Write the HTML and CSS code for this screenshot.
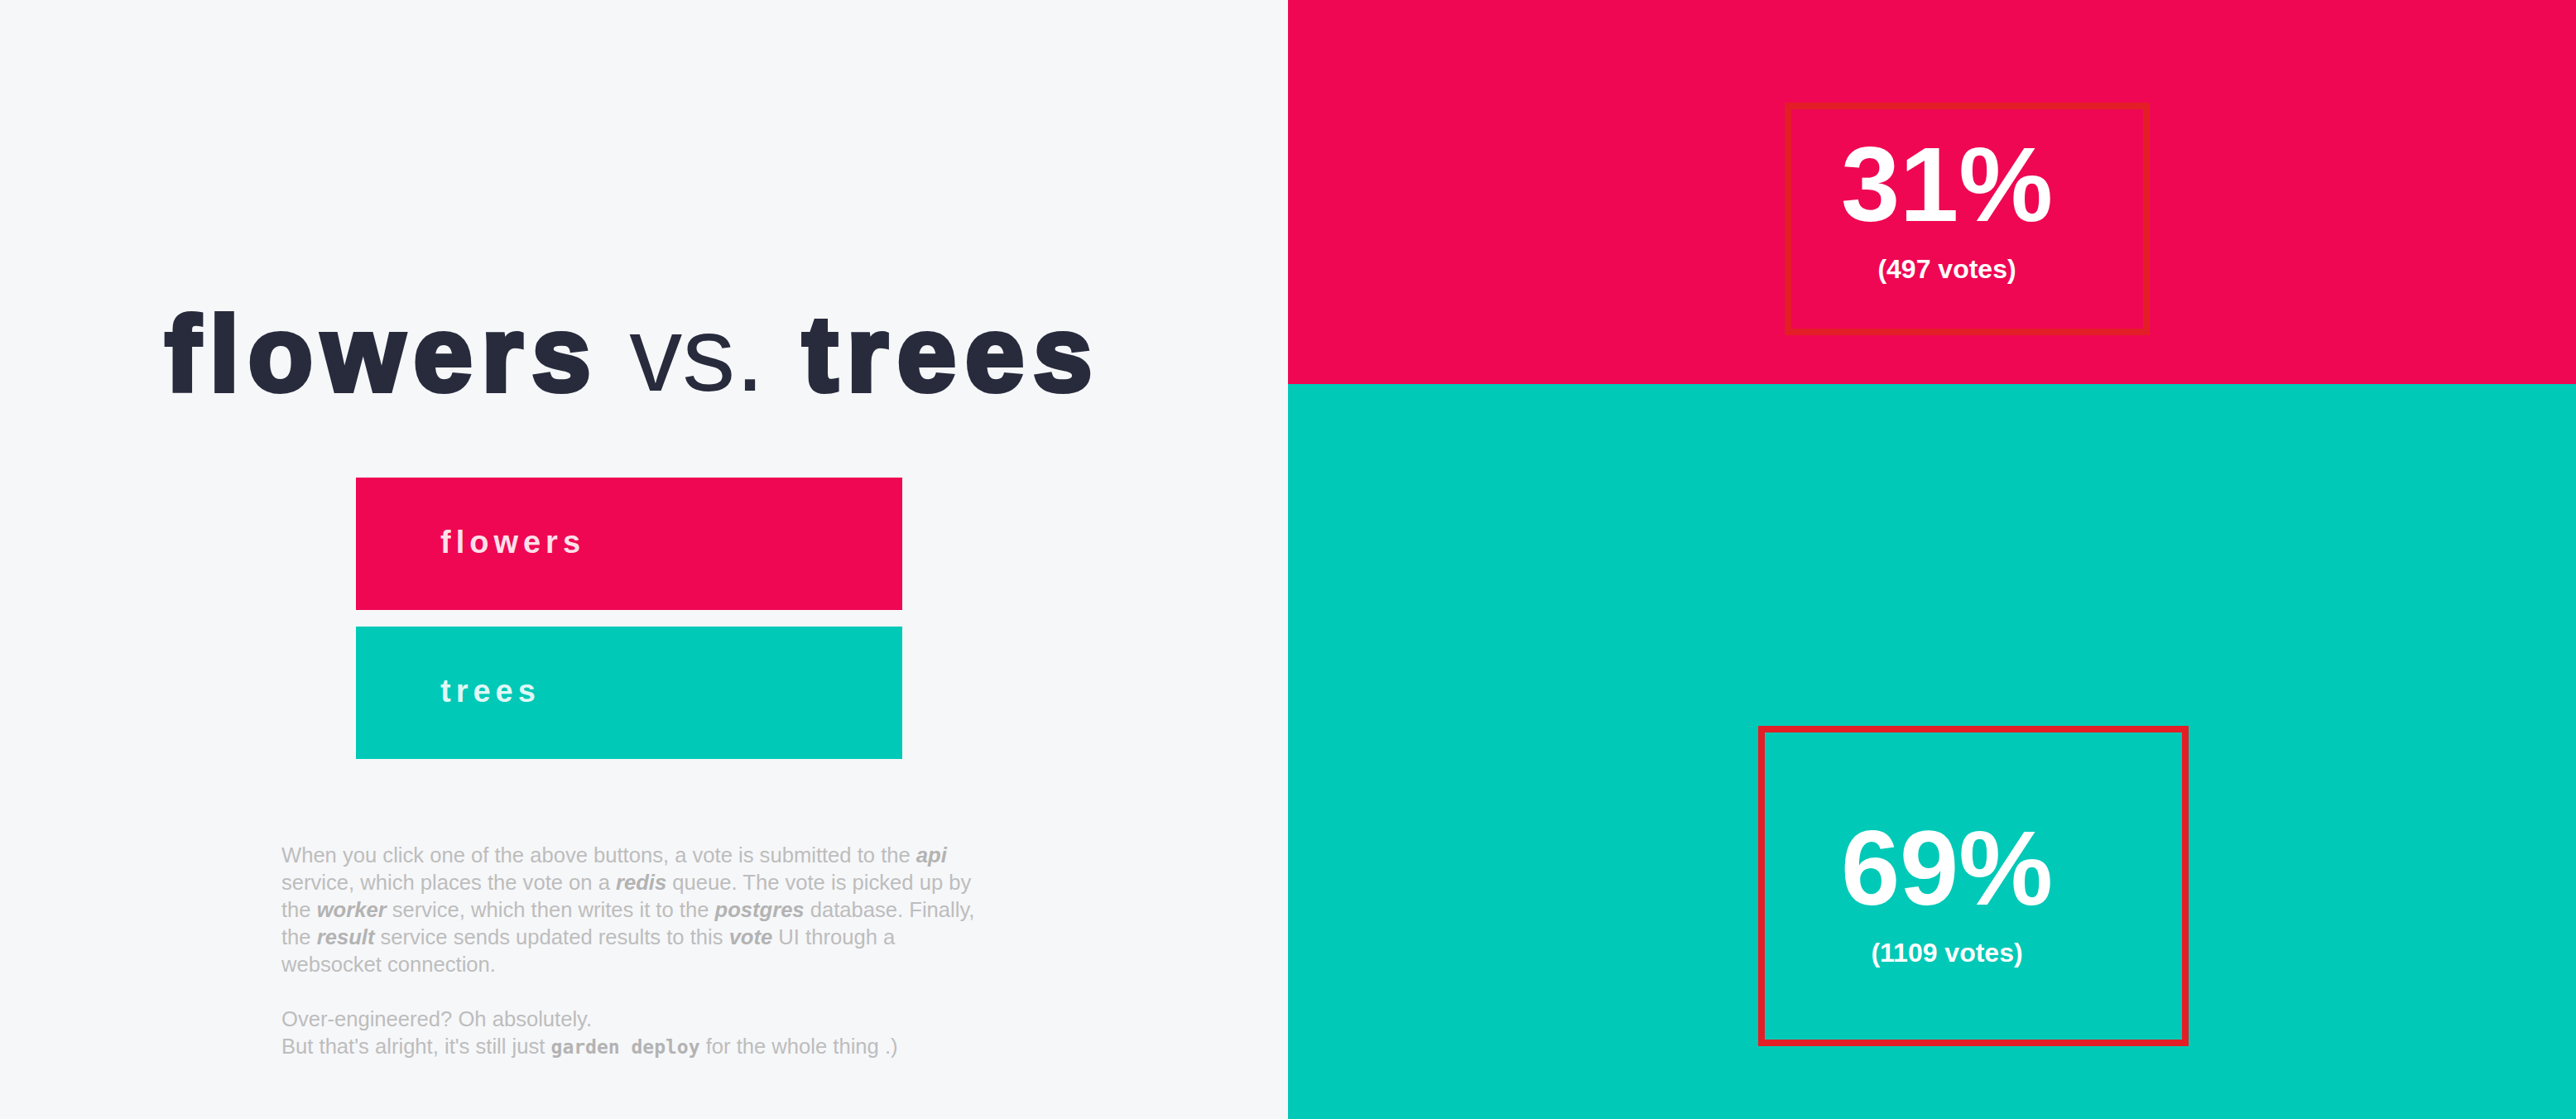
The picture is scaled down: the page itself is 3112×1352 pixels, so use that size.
FILE: index.html
```html
<!DOCTYPE html>
<html lang="en">
<head>
<meta charset="utf-8">
<title>flowers vs. trees</title>
<link rel="stylesheet" href="styles.css">
</head>
<body>
<div class="app">
  <section class="vote">
    <h1 class="title"><span class="heavy">flowers</span> <span class="vs">vs.</span> <span class="heavy heavy-last">trees</span></h1>
    <div class="choices">
      <button class="choice choice-a">flowers</button>
      <button class="choice choice-b">trees</button>
    </div>
    <div class="about">
      <p>When you click one of the above buttons, a vote is submitted to the <em class="svc">api</em> service, which places the vote on a <em class="svc">redis</em> queue. The vote is picked up by the <em class="svc">worker</em> service, which then writes it to the <em class="svc">postgres</em> database. Finally, the <em class="svc">result</em> service sends updated results to this <em class="svc">vote</em> UI through a websocket connection.</p>
      <p>Over-engineered? Oh absolutely.<br>But that's alright, it's still just <code>garden deploy</code> for the whole thing .)</p>
    </div>
  </section>
  <section class="results">
    <div class="result result-a">
      <div class="pct">31%</div>
      <div class="count">(497 votes)</div>
    </div>
    <div class="result result-b">
      <div class="pct">69%</div>
      <div class="count">(1109 votes)</div>
    </div>
    <div class="mark mark-a"></div>
    <div class="mark mark-b"></div>
  </section>
</div>
</body>
</html>
```

FILE: styles.css
```css
html, body {
  margin: 0;
  padding: 0;
}
body {
  width: 3112px;
  height: 1352px;
  overflow: hidden;
  font-family: "Liberation Sans", Arial, sans-serif;
  background: #f6f7f9;
}
.app {
  display: grid;
  grid-template-columns: 1556px 1fr;
  height: 1352px;
}
.vote {
  background: #f6f7f9;
  padding: 364px 36px 0 0;
  display: flex;
  flex-direction: column;
  align-items: center;
}
.title {
  margin: 0;
  font-size: 128px;
  line-height: 128px;
  color: #272b3c;
  white-space: nowrap;
  text-align: center;
}
.title .heavy {
  font-weight: 700;
  letter-spacing: 11px;
  -webkit-text-stroke: 6px #272b3c;
}
.title .heavy-last {
  margin-left: 10px;
  margin-right: -10px;
}
.title .vs {
  font-weight: 400;
}
.choices {
  margin-top: 85px;
  display: flex;
  flex-direction: column;
  gap: 20px;
}
.choice {
  width: 660px;
  height: 160px;
  border: 0;
  margin: 0;
  padding: 0 0 4px 102px;
  text-align: left;
  font-family: "Liberation Sans", Arial, sans-serif;
  font-weight: 700;
  font-size: 38px;
  letter-spacing: 6px;
  color: rgba(255, 255, 255, 0.9);
  cursor: pointer;
}
.choice-a { background: #ef0753; }
.choice-b { background: #00c9b7; }
.about {
  margin-top: 100px;
  width: 850px;
  margin-left: 10px;
  font-size: 25.6px;
  line-height: 33px;
  color: #bdbdbd;
}
.about p {
  margin: 0 0 33px;
}
.about .svc {
  font-weight: 700;
  font-style: italic;
  color: #b3b3b3;
}
.about code {
  font-family: "DejaVu Sans Mono", "Liberation Mono", monospace;
  font-weight: 700;
  font-size: 23px;
  color: #b3b3b3;
}
.results {
  position: relative;
  display: flex;
  flex-direction: column;
  color: #fff;
  text-align: center;
}
.result {
  padding-left: 36px;
}
.result-a {
  background: #ef0753;
  height: 464px;
  box-sizing: border-box;
  padding-top: 159px;
}
.result-b {
  background: #00c9b7;
  flex: 1;
  padding-top: 521px;
}
.pct {
  font-size: 128px;
  line-height: 128px;
  font-weight: 700;
}
.count {
  margin-top: 22px;
  font-size: 32px;
  line-height: 32px;
  font-weight: 700;
}
.mark {
  position: absolute;
  box-sizing: border-box;
  border: 8px solid #e41e26;
}
.mark-a {
  left: 600px;
  top: 124px;
  width: 441px;
  height: 281px;
}
.mark-b {
  left: 568px;
  top: 877px;
  width: 520px;
  height: 387px;
}
```
